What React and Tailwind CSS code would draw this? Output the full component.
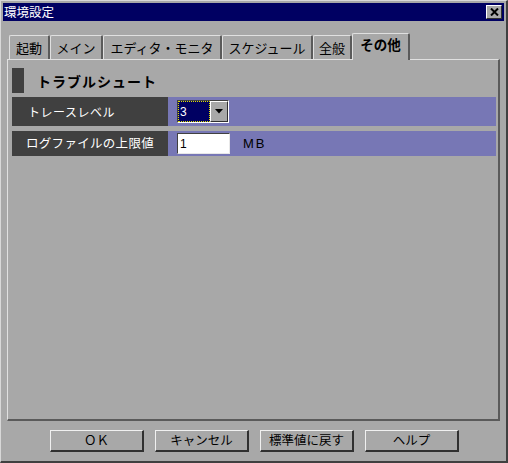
import React from "react";

const jp = { fontFamily: '"Noto Sans CJK JP", "Noto Sans", sans-serif' };

const tabs = [
  { label: "起動", w: "w-[41px]" },
  { label: "メイン", w: "w-[53px]" },
  { label: "エディタ・モニタ", w: "w-[119px]" },
  { label: "スケジュール", w: "w-[91px]" },
  { label: "全般", w: "w-[39px]" },
];

const buttons = ["ＯＫ", "キャンセル", "標準値に戻す", "ヘルプ"];

const App = () => {
  return (
    <div
      className="w-[508px] h-[463px] bg-[#a8a8a8] border-t border-l border-t-[#d8d8d8] border-l-[#d8d8d8] border-r-2 border-b-2 border-r-[#404040] border-b-[#404040] flex flex-col p-[2px] text-black"
      style={jp}
    >
      {/* タイトルバー */}
      <div className="h-[18px] bg-[#000062] flex items-center justify-between pl-[1px] pr-[2px]">
        <span className="text-white text-[12.5px] leading-none">環境設定</span>
        <div className="w-[16px] h-[14px] bg-[#a8a8a8] border-t border-l border-t-white border-l-white border-r border-b border-r-[#303030] border-b-[#303030] flex items-center justify-center">
          <svg width="9" height="8" viewBox="0 0 9 8">
            <path d="M1 0.5 L8 7.5 M8 0.5 L1 7.5" stroke="#000" strokeWidth="2" />
          </svg>
        </div>
      </div>

      {/* タブ */}
      <div className="mt-[12px] mx-[4px] flex items-end h-[26px] pl-[2px] relative z-10">
        {tabs.map((t) => (
          <div
            key={t.label}
            className={`${t.w} h-[24px] border-t border-l border-t-[#e0e0e0] border-l-[#e0e0e0] border-r-2 border-r-[#5a5a5a] rounded-t-[2px] flex items-center justify-center text-[13px] leading-none`}
          >
            {t.label}
          </div>
        ))}
        <div className="w-[58px] h-[27px] -mb-[1px] bg-[#a8a8a8] border-t border-l border-t-[#e0e0e0] border-l-[#e0e0e0] border-r-2 border-r-[#5a5a5a] rounded-t-[2px] flex items-start pt-[4px] justify-center text-[13.5px] font-bold leading-none">
          その他
        </div>
      </div>

      {/* パネル */}
      <div className="mx-[4px] h-[362px] border-t border-l border-t-[#e0e0e0] border-l-[#e0e0e0] border-r-2 border-b-2 border-r-[#5a5a5a] border-b-[#5a5a5a] pt-[8px] pl-[4px] pr-[2px] flex flex-col">
        <div className="flex items-center h-[25px]">
          <div className="w-[12px] h-[25px] bg-[#404040]" />
          <span className="ml-[13px] text-[14px] font-bold tracking-[1px] leading-none">
            トラブルシュート
          </span>
        </div>

        <div className="mt-[4px] flex h-[29px]">
          <div className="w-[156px] bg-[#404040] text-white text-[12px] tracking-[0.5px] flex items-center pl-[16px]">
            トレースレベル
          </div>
          <div className="flex-1 bg-[#7777b5] flex items-center pl-[9px]">
            <div className="flex h-[23px] border-t border-l border-t-[#404040] border-l-[#404040] border-r border-b border-r-white border-b-white">
              <div className="w-[32px] bg-[#000062] text-white text-[12px] leading-none flex items-center pl-[2px] outline outline-1 outline-dotted outline-[#e0e000] -outline-offset-1" style={{ fontFamily: '"Liberation Sans", sans-serif' }}>
                3
              </div>
              <div className="w-[18px] bg-[#a8a8a8] border-t border-l border-t-white border-l-white border-r border-b border-r-[#303030] border-b-[#303030] flex items-center justify-center">
                <svg width="8" height="5" viewBox="0 0 8 5">
                  <path d="M0 0 H8 L4 4.5 Z" fill="#000" />
                </svg>
              </div>
            </div>
          </div>
        </div>

        <div className="mt-[5px] flex h-[25px]">
          <div className="w-[156px] bg-[#404040] text-white text-[12.5px] tracking-[0.3px] flex items-center pl-[14px]">
            ログファイルの上限値
          </div>
          <div className="flex-1 bg-[#7777b5] flex items-center pl-[9px]">
            <div className="w-[53px] h-[21px] bg-white border-t border-l border-t-[#404040] border-l-[#404040] border-r border-b border-r-[#e8e8e8] border-b-[#e8e8e8] flex items-center pl-[2px] text-[12px] leading-none" style={{ fontFamily: '"Liberation Sans", sans-serif' }}>
              1
            </div>
            <span className="ml-[13px] text-[13px] tracking-[2px] leading-none" style={{ fontFamily: '"Liberation Sans", sans-serif' }}>
              MB
            </span>
          </div>
        </div>
      </div>

      {/* ボタン */}
      <div className="mt-[9px] flex pl-[47px] gap-[11px]">
        {buttons.map((b) => (
          <div
            key={b}
            className="w-[94px] h-[22px] border-t border-l border-t-[#f0f0f0] border-l-[#f0f0f0] border-r-2 border-b-2 border-r-[#303030] border-b-[#303030] flex items-center justify-center text-[12.5px] leading-none"
          >
            {b}
          </div>
        ))}
      </div>
    </div>
  );
};

export default App;
